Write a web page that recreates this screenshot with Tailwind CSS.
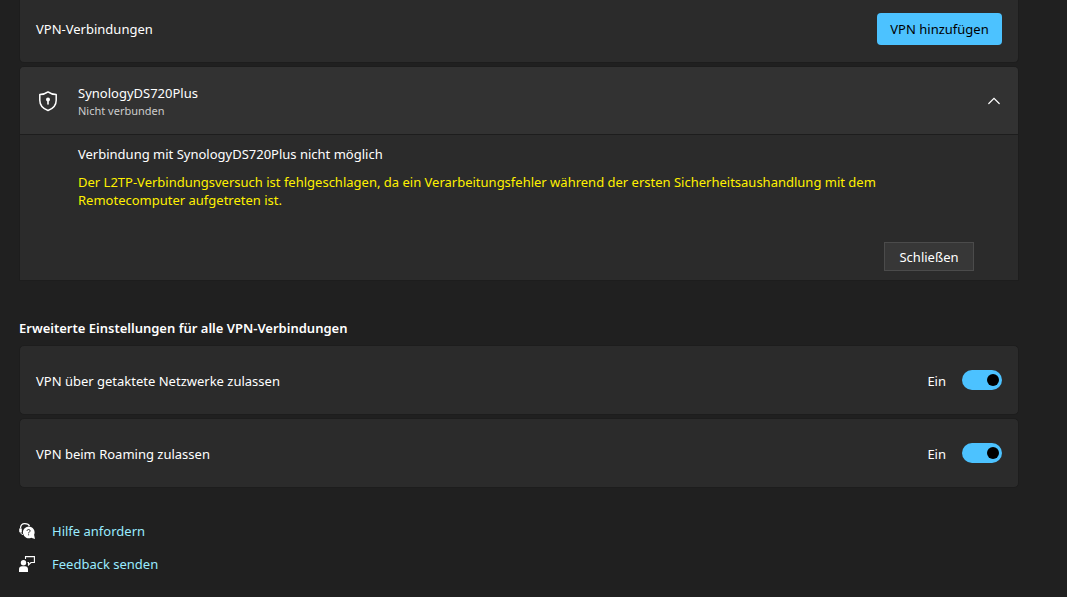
<!DOCTYPE html>
<html lang="de">
<head>
<meta charset="utf-8">
<meta name="viewport" content="width=device-width, initial-scale=1">
<title>VPN</title>
<script src="https://cdn.jsdelivr.net/npm/@tailwindcss/browser@4"></script>
</head>
<body class="min-h-screen bg-[#202020] font-['Segoe_UI','Noto_Sans',sans-serif] text-[13px] leading-[18px] text-white">
<main class="pl-[19px] pr-12">
  <section class="flex h-[63px] items-start justify-between rounded-b-[5px] border border-t-0 border-[#1d1d1d] bg-[#2b2b2b] px-4 pt-[13px]">
    <h2 class="pt-[7px]">VPN-Verbindungen</h2>
    <button type="button" class="h-8 w-[125px] rounded bg-[#4cc2ff] text-black">VPN hinzufügen</button>
  </section>

  <section class="mt-[3px] rounded-t-[5px] border border-[#1d1d1d] bg-[#2b2b2b]">
    <button type="button" aria-expanded="true" aria-controls="details" class="flex h-[68px] w-full items-center rounded-t border-b border-[#1d1d1d] bg-[#323232] pl-4 pr-[18px] text-left">
      <svg class="h-6 w-6" viewBox="0 0 24 24" fill="none" aria-hidden="true">
        <path d="M12 2.9C9.8 4.6 7 5.5 3.8 5.6V11.300C3.800 16.200 6.600 19.600 12 21.500C17.400 19.600 20.200 16.200 20.200 11.300V5.600C17 5.500 14.200 4.600 12 2.900Z" stroke="#fff" stroke-width="1.500" stroke-linejoin="round"/>
        <circle cx="12" cy="10.500" r="2" fill="#fff"/>
        <path d="M12 11V15" stroke="#fff" stroke-width="1.600" stroke-linecap="round"/>
      </svg>
      <span class="ml-[18px] flex flex-1 flex-col pt-0.5">
        <span>SynologyDS720Plus</span>
        <span class="text-[11px] text-[#cccccc]">Nicht verbunden</span>
      </span>
      <svg class="h-3 w-3" viewBox="0 0 12 12" fill="none" aria-hidden="true"><path d="M0.800 8.500L6 3.300L11.200 8.500" stroke="#fff" stroke-width="1.200" stroke-linecap="round"/></svg>
    </button>
    <div id="details" class="flex flex-col pb-[9px] pl-[58px] pr-11 pt-[10px]">
      <p>Verbindung mit SynologyDS720Plus nicht möglich</p>
      <p class="mt-[10px] max-w-[840px] text-[#fff100]">Der L2TP-Verbindungsversuch ist fehlgeschlagen, da ein Verarbeitungsfehler während der ersten Sicherheitsaushandlung mit dem Remotecomputer aufgetreten ist.</p>
      <button type="button" class="mt-[33px] h-[29px] w-[90px] self-end border border-[#4b4b4b] bg-[#373737]">Schließen</button>
    </div>
  </section>

  <h2 class="mt-[38px] font-semibold">Erweiterte Einstellungen für alle VPN-Verbindungen</h2>
  <div class="mt-2 flex flex-col gap-[3px]">
    <label class="flex h-[70px] items-center rounded-[5px] border border-[#1d1d1d] bg-[#2b2b2b] px-4">
      <span class="flex-1 pt-0.5">VPN über getaktete Netzwerke zulassen</span>
      <span class="mr-4 pt-0.5">Ein</span>
      <input type="checkbox" role="switch" checked class="flex h-5 w-10 appearance-none items-center justify-end rounded-full bg-[#4cc2ff] pr-[3px] before:h-3 before:w-3 before:rounded-full before:bg-black before:content-['']">
    </label>
    <label class="flex h-[70px] items-center rounded-[5px] border border-[#1d1d1d] bg-[#2b2b2b] px-4">
      <span class="flex-1 pt-0.5">VPN beim Roaming zulassen</span>
      <span class="mr-4 pt-0.5">Ein</span>
      <input type="checkbox" role="switch" checked class="flex h-5 w-10 appearance-none items-center justify-end rounded-full bg-[#4cc2ff] pr-[3px] before:h-3 before:w-3 before:rounded-full before:bg-black before:content-['']">
    </label>
  </div>

  <nav class="mt-[34px] flex flex-col items-start gap-[15px] text-[#99ebff]">
    <a href="#hilfe" class="flex items-center gap-[17px]">
      <svg class="h-4 w-4" viewBox="0 0 16 16" fill="none" aria-hidden="true">
        <path d="M1.500 5.500C1.500 2.500 3.200 0.600 5.800 0.600C8 0.600 9.900 1.500 10.500 3" stroke="#fff" stroke-width="1.200"/>
        <path d="M0.200 5.500H2.800V9.500H1.600C0.700 9.500 0.200 9 0.200 8.200Z" fill="#fff"/>
        <path d="M1.800 9.500C2 10.700 2.600 11.500 4 11.500" stroke="#fff"/>
        <path d="M9.600 3.500A5.900 5.900 0 0 1 15.100 11.800L16 16L12.200 14.800A5.900 5.900 0 1 1 9.600 3.500Z" fill="#fff"/>
        <path d="M8.100 7.900C8.100 6.900 8.700 6.500 9.600 6.500C10.500 6.500 11.100 7 11.100 7.800C11.100 8.900 9.600 9 9.600 10.400M9.600 11.300V12.300" stroke="#202020"/>
      </svg>
      <span>Hilfe anfordern</span>
    </a>
    <a href="#feedback" class="flex items-center gap-[17px]">
      <svg class="h-4 w-4" viewBox="0 0 16 16" fill="none" aria-hidden="true">
        <circle cx="4.500" cy="6.700" r="2.700" fill="#fff"/>
        <path d="M0 16V13.200C0 11.500 1.200 10.300 2.800 10.300H6.200C7.800 10.300 9 11.500 9 13.200V16Z" fill="#fff"/>
        <path d="M6.500 3V0.600H15.400V6.500H12L9.500 8.900V6.500H8.500" stroke="#fff" stroke-width="1.100"/>
      </svg>
      <span>Feedback senden</span>
    </a>
  </nav>
</main>
</body>
</html>
